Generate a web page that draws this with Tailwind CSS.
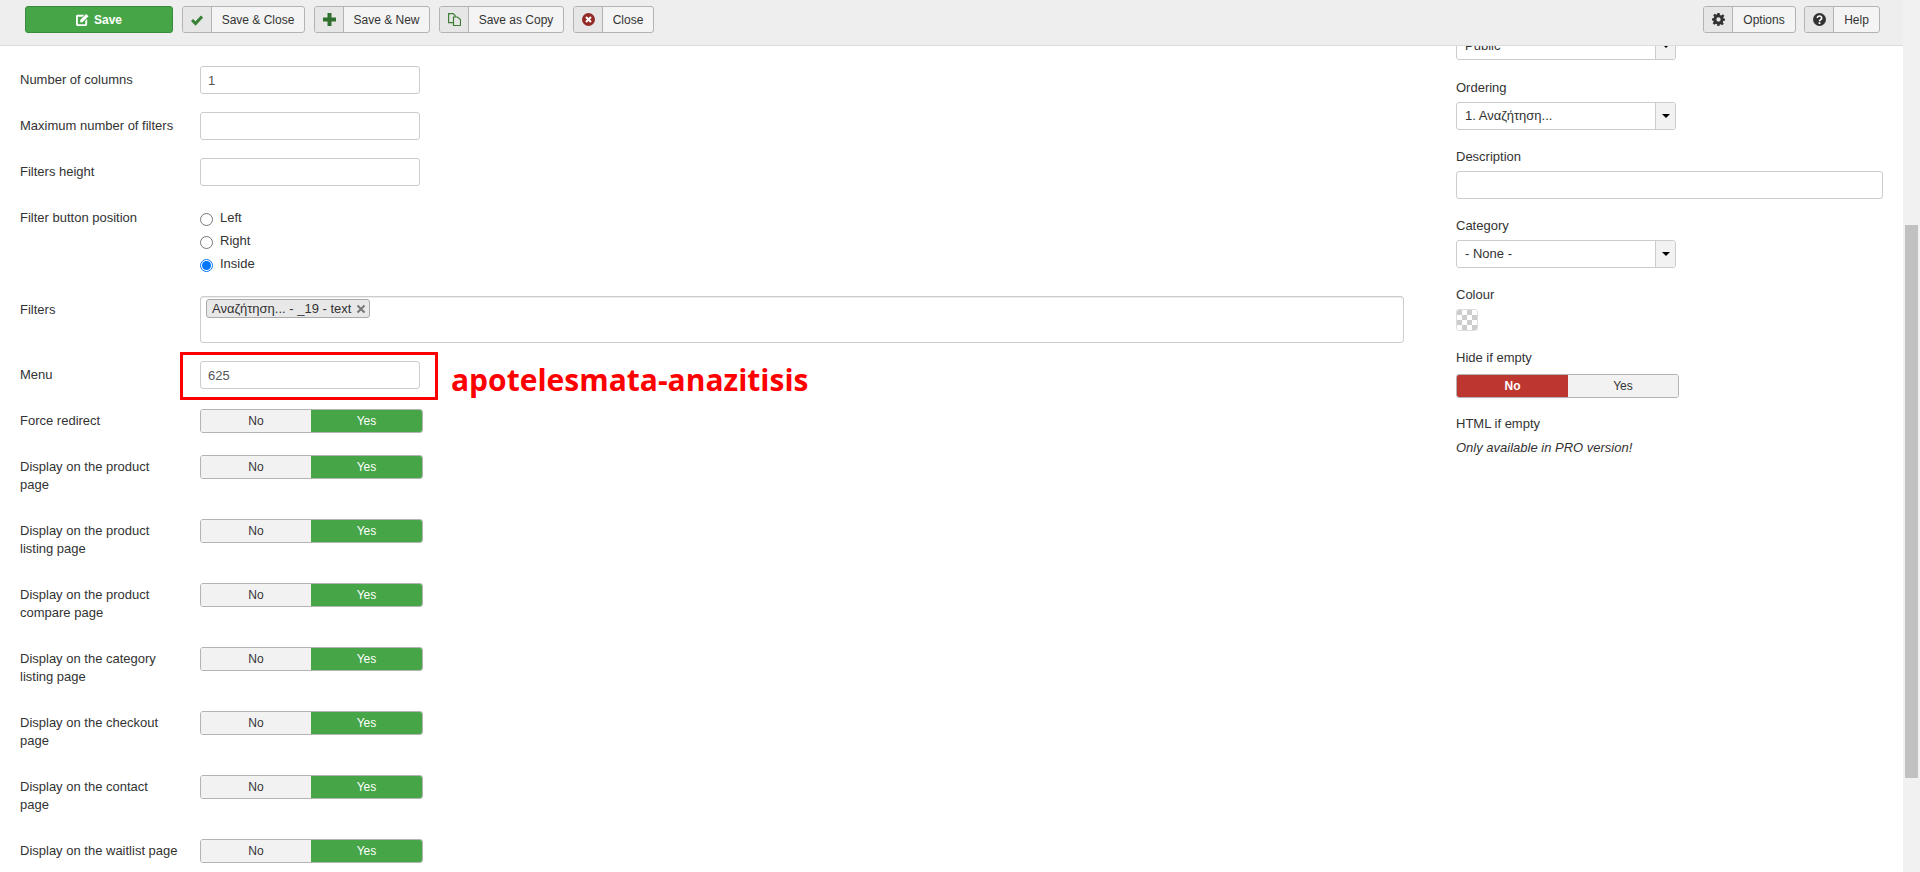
<!DOCTYPE html>
<html lang="en">
<head>
  <meta charset="UTF-8">
  <title>Edit Module</title>
  <script src="https://cdn.jsdelivr.net/npm/@tailwindcss/browser@4"></script>
</head>
<body class="h-[872px] overflow-hidden bg-white font-['Liberation_Sans',Arial,sans-serif] text-[13px] leading-[18px] text-[#333]">
  <div class="flex h-[872px]">
    <div class="relative min-w-0 flex-1 overflow-hidden">
      <!-- Toolbar -->
      <header class="absolute inset-x-0 top-0 z-10 flex h-[46px] items-start justify-between border-b border-[#ddd] bg-[#eee] pt-[6px] pl-[25px] pr-[23px] text-xs">
        <div class="flex gap-[9px]">
          <button class="flex h-[27px] w-[148px] items-center justify-center gap-[5px] rounded-[3px] border border-[#3a8a3d] bg-[#46a546] font-bold text-white">
            <svg class="h-[13px] w-[13px]" viewBox="0 0 14 14" fill="#fff"><path d="M1.500 2h7.500L7 4H2v8h8V8.500l2-2V12a2 2 0 0 1-2 2H2a2 2 0 0 1-2-2V3.500A1.500 1.500 0 0 1 1.500 2z"/><path d="M4.500 7.500 11 1l2.500 2.500L7 10H4.500z"/></svg>
            Save
          </button>
          <button class="flex h-[27px] w-[123px] items-stretch overflow-hidden rounded-[3px] border border-[#b3b3b3] bg-[#f4f4f4]">
            <span class="flex w-[29px] items-center justify-center border-r border-[#b3b3b3] bg-[#e6e6e6]"><svg class="h-[12px] w-[12px]" viewBox="0 0 12 12"><path d="M1 6 4.500 9.500 11 2.500" fill="none" stroke="#378137" stroke-width="3"/></svg></span>
            <span class="flex-1 self-center text-center">Save &amp; Close</span>
          </button>
          <button class="flex h-[27px] w-[116px] items-stretch overflow-hidden rounded-[3px] border border-[#b3b3b3] bg-[#f4f4f4]">
            <span class="flex w-[29px] items-center justify-center border-r border-[#b3b3b3] bg-[#e6e6e6]"><svg class="h-[13px] w-[13px]" viewBox="0 0 13 13" fill="#2f6f2f"><path d="M4.500 0h4v4.500H13v4H8.500V13h-4V8.500H0v-4h4.500z"/></svg></span>
            <span class="flex-1 self-center text-center">Save &amp; New</span>
          </button>
          <button class="flex h-[27px] w-[125px] items-stretch overflow-hidden rounded-[3px] border border-[#b3b3b3] bg-[#f4f4f4]">
            <span class="flex w-[29px] items-center justify-center border-r border-[#b3b3b3] bg-[#e6e6e6]"><svg class="h-[13px] w-[13px]" viewBox="0 0 13 13" fill="none" stroke="#3d7f35" stroke-width="1.200"><path d="M.6.600h4.500l2 2v7H.6z" fill="#e6e6e6"/><path d="M5.500 4h4l3 2.500v6h-7z" fill="#e6e6e6"/></svg></span>
            <span class="flex-1 self-center text-center">Save as Copy</span>
          </button>
          <button class="flex h-[27px] w-[81px] items-stretch overflow-hidden rounded-[3px] border border-[#b3b3b3] bg-[#f4f4f4]">
            <span class="flex w-[29px] items-center justify-center border-r border-[#b3b3b3] bg-[#e6e6e6]"><svg class="h-[13px] w-[13px]" viewBox="0 0 13 13"><circle cx="6.500" cy="6.500" r="6.500" fill="#942a25"/><path d="M4 4l5 5M9 4l-5 5" stroke="#fff" stroke-width="2"/></svg></span>
            <span class="flex-1 self-center text-center">Close</span>
          </button>
        </div>
        <div class="flex gap-[8px]">
          <button class="flex h-[27px] w-[93px] items-stretch overflow-hidden rounded-[3px] border border-[#b3b3b3] bg-[#f4f4f4]">
            <span class="flex w-[29px] items-center justify-center border-r border-[#b3b3b3] bg-[#e6e6e6]"><svg class="h-[13px] w-[13px]" viewBox="0 0 24 24" fill="#333"><path fill-rule="evenodd" d="M10 0h4l.700 3.500 2.300 1 3-2 2.800 2.800-2 3 1 2.300L24 10v4l-3.200.700-1 2.300 2 3-2.800 2.800-3-2-2.300 1L14 24h-4l-.700-3.200-2.300-1-3 2L1.200 19l2-3-1-2.300L0 14v-4l3.200-.700 1-2.300-2-3L5 1.200l3 2 1.300-.700zM12 8a4 4 0 1 0 0 8 4 4 0 0 0 0-8z"/></svg></span>
            <span class="flex-1 self-center text-center">Options</span>
          </button>
          <button class="flex h-[27px] w-[76px] items-stretch overflow-hidden rounded-[3px] border border-[#b3b3b3] bg-[#f4f4f4]">
            <span class="flex w-[29px] items-center justify-center border-r border-[#b3b3b3] bg-[#e6e6e6]"><svg class="h-[13px] w-[13px]" viewBox="0 0 13 13"><circle cx="6.500" cy="6.500" r="6.500" fill="#333"/><path d="M4.300 5a2.200 2 0 1 1 3.300 1.700c-.8.500-1.100.8-1.100 1.500" fill="none" stroke="#fff" stroke-width="1.600"/><rect x="5.600" y="9.200" width="1.800" height="1.800" fill="#fff"/></svg></span>
            <span class="flex-1 self-center text-center">Help</span>
          </button>
        </div>
      </header>

      <main class="flex">
        <!-- Left column -->
        <section class="w-[1456px] shrink-0 pt-[66px] pl-[20px]">
          <div class="flex h-[46px]"><label class="w-[180px] pt-[5px]">Number of columns</label><input value="1" class="h-[28px] w-[220px] rounded-[3px] border border-[#ccc] px-[7px] text-[#555]"></div>
          <div class="flex h-[46px]"><label class="w-[180px] pt-[5px]">Maximum number of filters</label><input class="h-[28px] w-[220px] rounded-[3px] border border-[#ccc] px-[7px]"></div>
          <div class="flex h-[51px]"><label class="w-[180px] pt-[5px]">Filters height</label><input class="h-[28px] w-[220px] rounded-[3px] border border-[#ccc] px-[7px]"></div>
          <div class="flex h-[87px]">
            <label class="w-[180px]">Filter button position</label>
            <div class="flex flex-col">
              <label class="flex h-[23px] items-start gap-[7px]"><span class="mt-[4px] h-[13px] w-[13px] rounded-full border border-[#767676] bg-white"></span>Left</label>
              <label class="flex h-[23px] items-start gap-[7px]"><span class="mt-[4px] h-[13px] w-[13px] rounded-full border border-[#767676] bg-white"></span>Right</label>
              <label class="flex h-[23px] items-start gap-[7px]"><span class="mt-[4px] flex h-[13px] w-[13px] items-center justify-center rounded-full border border-[#0075ff] bg-white"><span class="h-[9px] w-[9px] rounded-full bg-[#0075ff]"></span></span>Inside</label>
            </div>
          </div>
          <div class="flex h-[65px]">
            <label class="w-[180px] pt-[5px]">Filters</label>
            <div class="h-[47px] w-[1204px] rounded-[3px] border border-[#ccc] pt-[2px] pl-[5px] shadow-[inset_0_1px_1px_rgba(0,0,0,0.075)]">
              <span class="inline-flex h-[19px] w-[164px] items-center gap-[5px] rounded-[3px] border border-[#aaa] bg-[#e8e8e8] pl-[5px] leading-none">Αναζήτηση... - _19 - text<svg class="h-[10px] w-[10px]" viewBox="0 0 10 10"><path d="M1.500 1.500l7 7M8.500 1.500l-7 7" stroke="#777" stroke-width="2"/></svg></span>
            </div>
          </div>
          <div class="flex h-[48px]">
            <label class="w-[180px] pt-[5px]">Menu</label>
            <div class="relative">
              <input value="625" class="h-[28px] w-[220px] rounded-[3px] border border-[#ccc] px-[7px] text-[#555]">
              <div class="absolute -top-[9px] -left-[20px] h-[48px] w-[258px] border-[3px] border-[#f00]"></div>
              <span class="absolute top-[-1px] left-[251px] whitespace-nowrap font-['Open_Sans',sans-serif] text-[30px] leading-[40px] font-bold text-[#f00]">apotelesmata-anazitisis</span>
            </div>
          </div>
          <div class="flex h-[46px]"><label class="w-[180px] pt-[3px]">Force redirect</label><div class="flex h-[24px] w-[223px] overflow-hidden rounded-[3px] border border-[#b3b3b3] text-center text-xs"><span class="flex-1 bg-[#f2f2f2] leading-[22px]">No</span><span class="w-[111px] bg-[#46a546] leading-[22px] text-white">Yes</span></div></div>
          <div class="flex h-[64px]"><label class="w-[145px] mr-[35px] pt-[3px]">Display on the product page</label><div class="flex h-[24px] w-[223px] overflow-hidden rounded-[3px] border border-[#b3b3b3] text-center text-xs"><span class="flex-1 bg-[#f2f2f2] leading-[22px]">No</span><span class="w-[111px] bg-[#46a546] leading-[22px] text-white">Yes</span></div></div>
          <div class="flex h-[64px]"><label class="w-[145px] mr-[35px] pt-[3px]">Display on the product listing page</label><div class="flex h-[24px] w-[223px] overflow-hidden rounded-[3px] border border-[#b3b3b3] text-center text-xs"><span class="flex-1 bg-[#f2f2f2] leading-[22px]">No</span><span class="w-[111px] bg-[#46a546] leading-[22px] text-white">Yes</span></div></div>
          <div class="flex h-[64px]"><label class="w-[145px] mr-[35px] pt-[3px]">Display on the product compare page</label><div class="flex h-[24px] w-[223px] overflow-hidden rounded-[3px] border border-[#b3b3b3] text-center text-xs"><span class="flex-1 bg-[#f2f2f2] leading-[22px]">No</span><span class="w-[111px] bg-[#46a546] leading-[22px] text-white">Yes</span></div></div>
          <div class="flex h-[64px]"><label class="w-[145px] mr-[35px] pt-[3px]">Display on the category listing page</label><div class="flex h-[24px] w-[223px] overflow-hidden rounded-[3px] border border-[#b3b3b3] text-center text-xs"><span class="flex-1 bg-[#f2f2f2] leading-[22px]">No</span><span class="w-[111px] bg-[#46a546] leading-[22px] text-white">Yes</span></div></div>
          <div class="flex h-[64px]"><label class="w-[145px] mr-[35px] pt-[3px]">Display on the checkout page</label><div class="flex h-[24px] w-[223px] overflow-hidden rounded-[3px] border border-[#b3b3b3] text-center text-xs"><span class="flex-1 bg-[#f2f2f2] leading-[22px]">No</span><span class="w-[111px] bg-[#46a546] leading-[22px] text-white">Yes</span></div></div>
          <div class="flex h-[64px]"><label class="w-[145px] mr-[35px] pt-[3px]">Display on the contact page</label><div class="flex h-[24px] w-[223px] overflow-hidden rounded-[3px] border border-[#b3b3b3] text-center text-xs"><span class="flex-1 bg-[#f2f2f2] leading-[22px]">No</span><span class="w-[111px] bg-[#46a546] leading-[22px] text-white">Yes</span></div></div>
          <div class="flex h-[46px]"><label class="w-[180px] pt-[3px]">Display on the waitlist page</label><div class="flex h-[24px] w-[223px] overflow-hidden rounded-[3px] border border-[#b3b3b3] text-center text-xs"><span class="flex-1 bg-[#f2f2f2] leading-[22px]">No</span><span class="w-[111px] bg-[#46a546] leading-[22px] text-white">Yes</span></div></div>
        </section>

        <!-- Right column -->
        <aside class="w-[427px] shrink-0 pt-[32px]">
          <div class="flex h-[28px] w-[220px] overflow-hidden rounded-[3px] border border-[#ccc]"><span class="flex-1 pl-[8px] leading-[26px]">Public</span><span class="flex w-[20px] items-center justify-center border-l border-[#ccc] bg-[#f2f2f2]"><span class="border-x-[4px] border-t-[4px] border-x-transparent border-t-black"></span></span></div>
          <label class="mt-[19px] block">Ordering</label>
          <div class="mt-[5px] flex h-[28px] w-[220px] overflow-hidden rounded-[3px] border border-[#ccc]"><span class="flex-1 pl-[8px] leading-[26px]">1. Αναζήτηση...</span><span class="flex w-[20px] items-center justify-center border-l border-[#ccc] bg-[#f2f2f2]"><span class="border-x-[4px] border-t-[4px] border-x-transparent border-t-black"></span></span></div>
          <label class="mt-[18px] block">Description</label>
          <input class="mt-[5px] block h-[28px] w-[427px] rounded-[3px] border border-[#ccc]">
          <label class="mt-[18px] block">Category</label>
          <div class="mt-[5px] flex h-[28px] w-[220px] overflow-hidden rounded-[3px] border border-[#ccc]"><span class="flex-1 pl-[8px] leading-[26px]">- None -</span><span class="flex w-[20px] items-center justify-center border-l border-[#ccc] bg-[#f2f2f2]"><span class="border-x-[4px] border-t-[4px] border-x-transparent border-t-black"></span></span></div>
          <label class="mt-[18px] block">Colour</label>
          <div class="mt-[5px] grid h-[22px] w-[22px] grid-cols-4 grid-rows-4 overflow-hidden rounded-[3px] border border-[#ddd]">
            <i class="bg-[#ccc]"></i><i class="bg-white"></i><i class="bg-[#ccc]"></i><i class="bg-white"></i>
            <i class="bg-white"></i><i class="bg-[#ccc]"></i><i class="bg-white"></i><i class="bg-[#ccc]"></i>
            <i class="bg-[#ccc]"></i><i class="bg-white"></i><i class="bg-[#ccc]"></i><i class="bg-white"></i>
            <i class="bg-white"></i><i class="bg-[#ccc]"></i><i class="bg-white"></i><i class="bg-[#ccc]"></i>
          </div>
          <label class="mt-[18px] block">Hide if empty</label>
          <div class="mt-[7px] flex h-[24px] w-[223px] overflow-hidden rounded-[3px] border border-[#b3b3b3] text-center text-xs"><span class="w-[111px] bg-[#bd362f] leading-[22px] font-bold text-white">No</span><span class="flex-1 bg-[#f2f2f2] leading-[22px]">Yes</span></div>
          <label class="mt-[17px] block">HTML if empty</label>
          <p class="mt-[6px] italic">Only available in PRO version!</p>
        </aside>
      </main>
    </div>
    <!-- Scrollbar -->
    <div class="w-[17px] shrink-0 bg-[#f1f1f1] pt-[225px] pl-[2px]"><div class="h-[553px] w-[13px] bg-[#c1c1c1]"></div></div>
  </div>
</body>
</html>
